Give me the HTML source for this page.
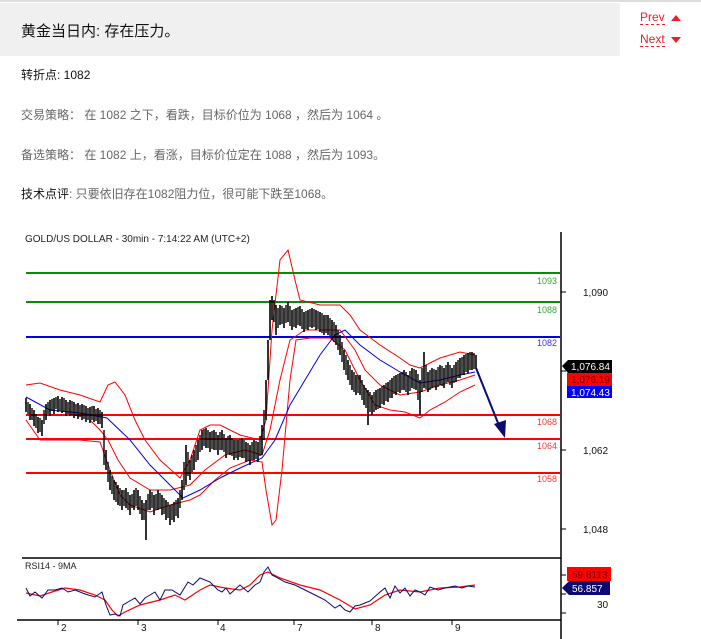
<!DOCTYPE html>
<html><head><meta charset="utf-8">
<style>
body{margin:0;width:701px;height:639px;overflow:hidden;background:#fff;font-family:"Liberation Sans","Noto Sans CJK SC",sans-serif;position:relative}
.top{position:absolute;left:0;top:0;width:701px;height:2px;background:#ddd}
.hdr{position:absolute;left:0;top:3px;width:620px;height:53px;background:#f0f0f0}
.hdr h1{margin:0;position:absolute;left:21px;top:17px;font-size:15px;font-weight:normal;color:#111}
.nav{position:absolute;left:640px;font-size:12px;color:#e8202a;border-bottom:1px dashed #e8202a;line-height:13px}
.tri{position:absolute;width:0;height:0;border-left:5px solid transparent;border-right:5px solid transparent}
p{position:absolute;left:21px;margin:0;font-size:12px;color:#666}
b{font-weight:normal;color:#111}
</style></head><body>
<div class="top"></div>
<div class="hdr"><h1>黄金当日内: 存在压力。</h1></div>
<div class="nav" style="top:11px">Prev</div><div class="tri" style="left:671px;top:15px;border-bottom:6px solid #e8202a"></div>
<div class="nav" style="top:33px">Next</div><div class="tri" style="left:671px;top:37px;border-top:6px solid #e8202a"></div>
<p style="top:66px"><b>转折点</b><span style="color:#111">: 1082</span></p>
<p style="top:106px">交易策略： 在 1082 之下，看跌，目标价位为 1068 ，然后为 1064 。</p>
<p style="top:146px">备选策略： 在 1082 上，看涨，目标价位定在 1088 ，然后为 1093。</p>
<p style="top:185px"><b>技术点评</b>: 只要依旧存在1082阻力位，很可能下跌至1068。</p>
<svg style="position:absolute;left:0;top:0" width="701" height="639" font-family="Liberation Sans,sans-serif">
<text x="25" y="242" font-size="10" fill="#222">GOLD/US DOLLAR - 30min - 7:14:22 AM (UTC+2)</text>
<g stroke-width="2">
<line x1="26" y1="273" x2="560" y2="273" stroke="#0a8a0a"/>
<line x1="26" y1="302" x2="560" y2="302" stroke="#0a8a0a"/>
<line x1="26" y1="337" x2="560" y2="337" stroke="#0000e0"/>
<line x1="26" y1="415" x2="560" y2="415" stroke="#f00"/>
<line x1="26" y1="439" x2="560" y2="439" stroke="#f00"/>
<line x1="26" y1="473" x2="560" y2="473" stroke="#f00"/>
</g>
<g font-size="9">
<text x="537" y="284" fill="#3a3">1093</text><text x="537" y="313" fill="#3a3">1088</text>
<text x="537" y="346" fill="#33f">1082</text><text x="537" y="425" fill="#f33">1068</text>
<text x="537" y="449" fill="#f33">1064</text><text x="537" y="482" fill="#f33">1058</text>
</g>
<polyline fill="none" stroke="#f00" stroke-width="1" points="26,385 40,383 60,390 80,395 100,402 108,385 115,382 125,395 135,420 145,440 160,460 180,478 190,460 200,430 210,425 220,425 240,435 260,440 266,420 272,330 280,260 288,250 295,280 300,300 320,305 340,305 350,315 360,330 380,345 400,358 410,365 420,368 440,358 460,352 475,355"/>
<polyline fill="none" stroke="#f00" stroke-width="1" points="26,420 40,440 60,440 80,440 100,442 110,470 120,495 130,505 150,512 170,505 190,500 200,495 215,480 230,468 250,460 262,462 266,490 272,525 276,520 282,470 290,380 296,340 310,338 330,338 345,350 360,380 375,405 390,410 405,412 420,418 430,410 445,402 460,392 475,385"/>
<polyline fill="none" stroke="#f00" stroke-width="1" points="90,420 100,430 108,440 118,460 130,478 150,490 170,490 190,485 205,470 225,455 245,450 262,455 270,430 280,380 290,340 305,330 320,330 340,330 355,350 365,370 380,385 400,395 420,392 440,385 460,380 475,375"/>
<polyline fill="none" stroke="#0000e0" stroke-width="1" points="26,397 50,410 80,413 107,418 130,440 150,465 170,485 183,498 200,490 220,478 240,468 262,458 275,440 290,405 305,380 320,355 335,335 345,330 360,345 380,360 400,372 420,383 440,380 460,375 475,372"/>
<path fill="none" stroke="#000" stroke-width="1.6" d="M26 398V412M30 404V420M34 410V426M38 417V433M42 420V436M46 404V420M50 400V416M54 398V414M58 396V412M62 397V413M66 400V416M70 400V416M74 402V418M78 403V419M82 404V420M86 406V422M90 407V423M94 406V422M98 408V424M102 412V428M106 450V470M110 470V490M114 480V500M118 485V505M122 490V510M126 488V508M130 495V515M134 490V510M138 490V510M142 500V520M146 500V540M150 490V510M154 495V515M158 490V510M162 495V515M166 500V520M170 505V525M174 502V522M178 498V518M182 480V500M186 445V485M190 460V480M194 450V470M198 440V460M202 430V450M206 428V448M210 432V452M214 430V450M218 435V455M222 430V450M226 438V458M230 435V455M234 440V460M238 440V460M242 438V458M246 442V462M250 445V465M254 440V460M258 442V462M262 425V455M266 380V420M268 340V380M270 300V340M272 296V320M276 305V335M280 305V325M284 308V328M288 302V322M292 310V330M296 308V328M300 306V326M304 312V332M308 310V330M312 308V328M316 310V330M320 312V332M324 315V335M328 315V335M332 320V340M336 325V345M340 335V355M344 350V370M348 360V380M352 370V390M356 375V395M360 375V395M364 385V405M368 390V425M372 395V415M376 390V410M380 388V408M384 385V405M388 382V402M392 378V398M396 375V395M400 373V393M404 370V390M408 375V395M412 368V388M416 370V390M420 380V415M424 352V388M428 372V392M432 368V388M436 370V390M440 365V385M444 368V388M448 362V382M452 368V388M456 362V382M460 358V378M464 355V375M468 353V373M472 352V370M476 355V369"/>
<path fill="none" stroke="#000" stroke-width="1.4" d="M28 402V414M32 408V420M36 414V428M40 418V432M44 410V424M48 402V414M52 399V411M56 397V409M60 399V411M64 398V412M68 402V414M72 401V415M76 404V416M80 405V417M84 405V419M88 408V420M92 406V420M96 409V421M100 410V424M104 430V465M108 462V482M112 476V494M116 482V502M120 488V506M124 490V506M128 492V510M132 494V508M136 488V506M140 496V514M144 503V520M148 494V510M152 492V508M156 494V510M160 493V509M164 498V514M168 502V518M172 504V520M176 500V516M180 490V508M184 462V490M188 452V476M192 455V472M196 445V462M200 435V452M204 429V446M208 430V448M212 431V449M216 432V450M220 432V450M224 434V452M228 436V454M232 438V456M236 440V458M240 439V457M244 440V458M248 443V461M252 442V460M256 441V459M260 436V456M264 410V440M274 300V322M278 308V328M282 306V324M286 305V323M290 306V326M294 309V327M298 307V325M302 309V329M306 311V329M310 309V327M314 309V327M318 311V329M322 313V333M326 315V333M330 318V336M334 322V342M338 330V350M342 342V362M346 355V375M350 365V385M354 372V392M358 375V393M362 380V400M366 388V408M370 392V412M374 392V412M378 389V409M382 386V404M386 383V401M390 380V398M394 376V394M398 374V392M402 372V390M406 372V392M410 371V391M414 369V389M418 374V400M422 368V392M426 365V389M430 370V390M434 369V387M438 367V387M442 366V386M446 365V383M450 365V385M454 365V383M458 360V378M462 357V375M466 354V372M470 352V370M474 353V369"/>
<line x1="476" y1="368" x2="500" y2="428" stroke="#0a0a70" stroke-width="2"/>
<polygon points="494,424 506,420 505,438" fill="#0a0a70"/>
<line x1="561" y1="232" x2="561" y2="639" stroke="#000" stroke-width="1.5"/>
<line x1="22" y1="558" x2="561" y2="558" stroke="#000" stroke-width="1.5"/>
<line x1="17" y1="620" x2="561" y2="620" stroke="#000" stroke-width="1.5"/>
<g stroke="#000"><line x1="561" y1="292" x2="566" y2="292"/><line x1="561" y1="371" x2="566" y2="371"/><line x1="561" y1="450" x2="566" y2="450"/><line x1="561" y1="529" x2="566" y2="529"/><line x1="561" y1="613" x2="566" y2="613"/><line x1="561" y1="594" x2="566" y2="594"/><line x1="561" y1="575" x2="566" y2="575"/></g>
<g font-size="10" fill="#111"><text x="583" y="296">1,090</text><text x="583" y="454">1,062</text><text x="583" y="533">1,048</text><text x="597" y="608">30</text></g>
<polygon points="562,366 568,360 612,360 612,373 568,373" fill="#000"/>
<text x="571" y="370" font-size="10" fill="#fff">1,076.84</text>
<rect x="567" y="373" width="45" height="13" fill="#f00"/><text x="571" y="383" font-size="10" fill="#600">1,076.19</text>
<rect x="567" y="386" width="45" height="12" fill="#00f"/><text x="571" y="396" font-size="10" fill="#fff">1,074.43</text>
<text x="25" y="569" font-size="9" fill="#222">RSI14 - 9MA</text>
<rect x="567" y="567" width="44" height="14" fill="#f00"/><text x="572" y="578" font-size="10" fill="#600">59.8113</text>
<polygon points="562,588 569,581 610,581 610,595 569,595" fill="#0a0a70"/><text x="572" y="592" font-size="10" fill="#fff">56.857</text>
<polyline fill="none" stroke="#f00" stroke-width="1.2" points="26,593 40,596 55,591 65,588 80,590 95,595 105,600 112,610 118,616 125,612 140,605 160,600 175,595 185,600 200,590 210,585 225,588 240,590 250,585 260,575 268,572 280,578 300,585 320,590 340,600 355,609 370,605 385,595 400,590 420,592 440,588 460,587 475,585"/>
<polyline fill="none" stroke="#0a0a70" stroke-width="1" points="26,588 30,596 35,592 42,598 48,590 55,590 62,588 68,592 75,590 85,594 95,597 102,592 106,605 110,615 115,614 120,616 123,605 128,602 135,598 140,604 145,598 150,595 155,592 160,600 165,590 172,590 180,595 188,582 193,585 200,578 205,580 210,582 218,590 222,592 226,588 230,594 240,585 248,592 255,585 260,582 264,572 268,567 272,575 276,577 285,582 295,585 305,590 315,595 325,600 335,608 340,605 345,610 350,612 355,606 360,605 370,601 380,592 385,588 390,598 395,586 400,593 405,588 410,596 415,590 420,592 425,595 430,587 438,590 445,588 455,586 462,588 468,586 475,587"/>
<g stroke="#000"><line x1="58" y1="620" x2="58" y2="625"/><line x1="138" y1="620" x2="138" y2="625"/><line x1="218" y1="620" x2="218" y2="625"/><line x1="294" y1="620" x2="294" y2="625"/><line x1="372" y1="620" x2="372" y2="625"/><line x1="452" y1="620" x2="452" y2="625"/></g>
<g font-size="10" fill="#111"><text x="61" y="631">2</text><text x="141" y="631">3</text><text x="220" y="631">4</text><text x="297" y="631">7</text><text x="375" y="631">8</text><text x="455" y="631">9</text></g>
</svg>
</body></html>
